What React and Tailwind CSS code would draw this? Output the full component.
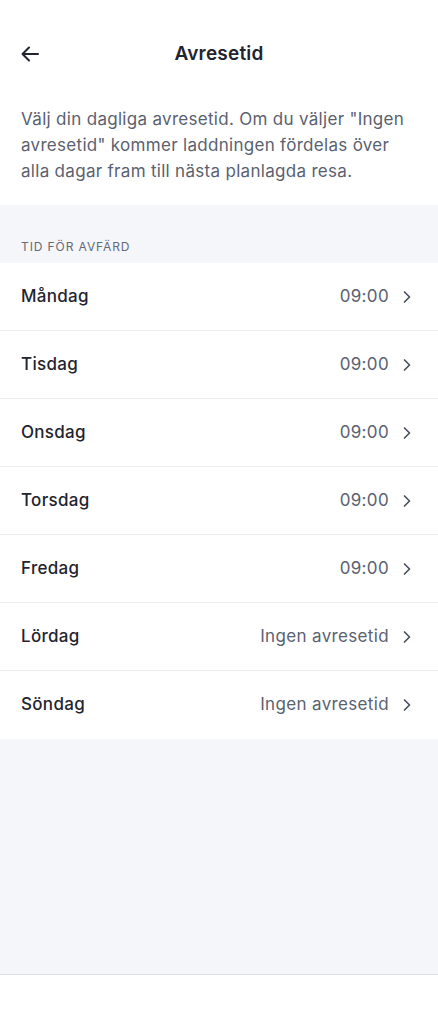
import React from "react";

const days = [
  { namn: "Måndag", tid: "09:00" },
  { namn: "Tisdag", tid: "09:00" },
  { namn: "Onsdag", tid: "09:00" },
  { namn: "Torsdag", tid: "09:00" },
  { namn: "Fredag", tid: "09:00" },
  { namn: "Lördag", tid: "Ingen avresetid" },
  { namn: "Söndag", tid: "Ingen avresetid" },
];

function Chevron() {
  return (
    <svg width="10" height="14" viewBox="0 0 10 14" fill="none" className="ml-[13px]">
      <path d="M2.5 2 L7.5 7 L2.5 12" stroke="#4b5261" strokeWidth="1.7" strokeLinecap="round" strokeLinejoin="round" />
    </svg>
  );
}

export default function App() {
  return (
    <div
      className="flex flex-col min-h-screen bg-white text-[#1f2430]"
      style={{ fontFamily: "Inter, 'Noto Sans', sans-serif" }}
    >
      <div className="relative flex items-center justify-center h-[108px]">
        <button className="absolute left-[19px] top-[43px] p-0">
          <svg width="22" height="22" viewBox="0 0 22 22" fill="none">
            <path d="M19 11 H4 M10 4.5 L3.5 11 L10 17.5" stroke="#1f2430" strokeWidth="2" strokeLinecap="round" strokeLinejoin="round" />
          </svg>
        </button>
        <h1 className="text-[19px] font-semibold tracking-[0.2px]">Avresetid</h1>
      </div>
      <p className="px-[21px] -mt-[2px] pb-[21px] text-[17px] leading-[26px] tracking-[0.3px] text-[#5a6170]">
        Välj din dagliga avresetid. Om du väljer "Ingen avresetid" kommer laddningen fördelas över alla dagar fram till nästa planlagda resa.
      </p>
      <div className="flex flex-col flex-1 bg-[#f5f6fa]">
        <div className="px-[21px] pt-[34px] pb-[8px] text-[12px] leading-[16px] tracking-[0.9px] text-[#636a78]">
          TID FÖR AVFÄRD
        </div>
        <div className="flex flex-col bg-white">
          {days.map((d, i) => (
            <div
              key={i}
              className={
                "flex items-center justify-between pl-[21px] pr-[26px] h-[68px] " +
                (i < days.length - 1 ? "border-b border-[#ebecef]" : "")
              }
            >
              <span className="text-[17px] font-medium tracking-[0.3px]">{d.namn}</span>
              <span className="flex items-center text-[17px] tracking-[0.35px] text-[#5a6170]">
                {d.tid}
                <Chevron />
              </span>
            </div>
          ))}
        </div>
        <div className="flex-1"></div>
        <div className="border-t border-[#dcdee3] h-[50px] bg-white"></div>
      </div>
    </div>
  );
}
